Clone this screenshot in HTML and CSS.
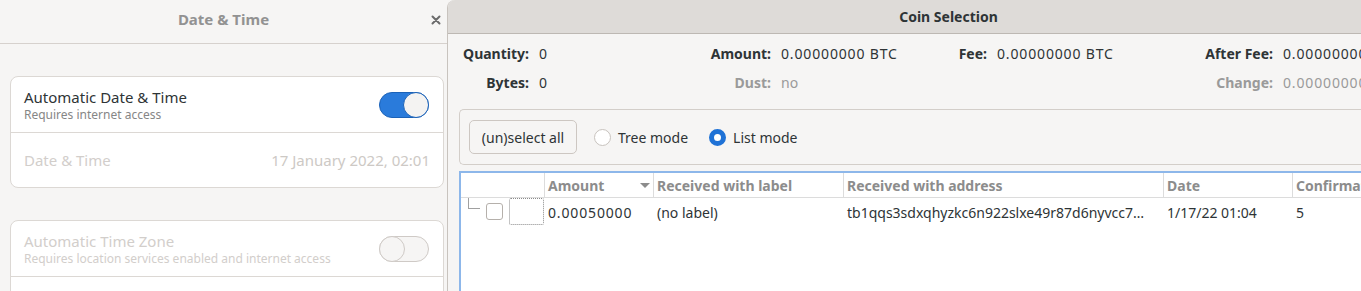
FILE: index.html
```html
<!DOCTYPE html>
<html lang="en">
<head>
    <meta charset="UTF-8">
    <title>Date &amp; Time / Coin Selection</title>
    <link rel="stylesheet" href="styles.css">
</head>
<body>
<div class="desktop">

    <!-- Settings window (backdrop) -->
    <section class="settings">
        <header class="settings-header">
            <span class="settings-title">Date &amp; Time</span>
            <svg class="close" width="10" height="10" viewBox="0 0 10 10">
                <path d="M1.5 1.5 L8.5 8.5 M8.5 1.5 L1.5 8.5" stroke="#6b6b6b" stroke-width="2" stroke-linecap="round"/>
            </svg>
        </header>

        <div class="settings-body">
            <div class="card">
                <div class="row">
                    <div class="row-text">
                        <div class="row-title">Automatic Date &amp; Time</div>
                        <div class="row-sub">Requires internet access</div>
                    </div>
                    <span class="switch on"><span class="knob"></span></span>
                </div>
                <div class="row disabled">
                    <div class="row-title">Date &amp; Time</div>
                    <div class="row-value">17 January 2022, 02:01</div>
                </div>
            </div>

            <div class="card">
                <div class="row disabled">
                    <div class="row-text">
                        <div class="row-title">Automatic Time Zone</div>
                        <div class="row-sub">Requires location services enabled and internet access</div>
                    </div>
                    <span class="switch"><span class="knob"></span></span>
                </div>
                <div class="row disabled"></div>
            </div>
        </div>
    </section>

    <!-- Coin Selection dialog -->
    <section class="dialog">
        <header class="dialog-header">Coin Selection</header>

        <div class="dialog-body">
            <div class="summary">
                <span class="lbl">Quantity:</span><span class="val">0</span>
                <span class="lbl">Amount:</span><span class="val num">0.00000000 BTC</span>
                <span class="lbl">Fee:</span><span class="val num">0.00000000 BTC</span>
                <span class="lbl">After Fee:</span><span class="val num">0.00000000 BTC</span>

                <span class="lbl">Bytes:</span><span class="val">0</span>
                <span class="lbl muted">Dust:</span><span class="val muted">no</span>
                <span class="lbl"></span><span class="val"></span>
                <span class="lbl muted">Change:</span><span class="val num muted">0.00000000 BTC</span>
            </div>

            <div class="toolbar">
                <button class="btn">(un)select all</button>
                <label class="radio"><span class="radio-dot"></span>Tree mode</label>
                <label class="radio checked"><span class="radio-dot"></span>List mode</label>
            </div>

            <div class="tree">
                <div class="tree-head">
                    <div class="col c-check"></div>
                    <div class="col c-amount">Amount<span class="sort"></span></div>
                    <div class="col c-label">Received with label</div>
                    <div class="col c-addr">Received with address</div>
                    <div class="col c-date">Date</div>
                    <div class="col c-conf">Confirmations</div>
                </div>
                <div class="tree-row">
                    <div class="col c-check">
                        <span class="branch"></span>
                        <span class="checkbox"></span>
                        <span class="focus-box"></span>
                    </div>
                    <div class="col c-amount num">0.00050000</div>
                    <div class="col c-label">(no label)</div>
                    <div class="col c-addr">tb1qqs3sdxqhyzkc6n922slxe49r87d6nyvcc7…</div>
                    <div class="col c-date">1/17/22 01:04</div>
                    <div class="col c-conf">5</div>
                </div>
            </div>
        </div>
    </section>

</div>
</body>
</html>
```

FILE: styles.css
```css
/* General Reset */
* {
    margin: 0;
    padding: 0;
    box-sizing: border-box;
}

body {
    background: #f6f5f4;
    color: #2e3436;
    font-family: 'Noto Sans', sans-serif;
    overflow: hidden;
}

.desktop {
    display: flex;
    width: 1361px;
    height: 291px;
    overflow: hidden;
}

/* Settings window */
.settings {
    flex: 0 0 447px;
    background: #f6f5f4;
}

.settings-header {
    height: 44px;
    border-bottom: 1px solid #d6d1cd;
    display: flex;
    align-items: center;
    justify-content: center;
    position: relative;
}

.settings-title {
    font-size: 15px;
    font-weight: 700;
    color: #929292;
    margin-top: -5px;
}

.close {
    position: absolute;
    right: 6px;
    top: 15px;
}

.settings-body {
    padding: 32px 3px 0 10px;
    display: flex;
    flex-direction: column;
    gap: 32px;
}

.card {
    background: #fff;
    border: 1px solid #dcd8d4;
    border-radius: 8px;
}

.row {
    height: 55px;
    display: flex;
    align-items: center;
    justify-content: space-between;
    padding: 0 13px 0 13px;
}

.row + .row {
    border-top: 1px solid #dcd8d4;
}

.row-title {
    font-size: 15px;
    color: #2e3436;
    line-height: 20px;
}

.row-sub {
    font-size: 12px;
    color: #868686;
    line-height: 16px;
}

.row-value {
    font-size: 15px;
    color: #cdc9c5;
}

.row.disabled .row-title,
.row.disabled .row-sub {
    color: #d2cecb;
}

.switch {
    width: 50px;
    height: 26px;
    border-radius: 13px;
    border: 1px solid #cfcac6;
    background: #f6f5f4;
    display: flex;
    align-items: center;
    padding: 0;
    margin-right: 1px;
}

.switch .knob {
    width: 26px;
    height: 26px;
    margin: -1px;
    border-radius: 50%;
    border: 1px solid #cfcac6;
    background: #f6f5f4;
}

.switch.on {
    background: #2a7bdb;
    border-color: #1b62b8;
    justify-content: flex-end;
}

.switch.on .knob {
    border-color: #1b62b8;
    background: #f4f3f2;
}

/* Coin Selection dialog */
.dialog {
    flex: 0 0 1002px;
    background: #f6f5f4;
    border-left: 1px solid #c8c3be;
    border-top-left-radius: 8px;
    overflow: hidden;
}

.dialog-header {
    height: 34px;
    background: #dedbd8;
    border-bottom: 1px solid #bdb8b3;
    display: flex;
    align-items: center;
    justify-content: center;
    font-size: 14px;
    font-weight: 700;
    color: #2e3436;
}

.dialog-body {
    padding: 5px 0 0 11px;
    font-size: 14px;
}

.summary {
    display: grid;
    grid-template-columns: 70px 120px 122px 100px 116px 150px 136px auto;
    grid-auto-rows: 29px;
    align-items: center;
}

.lbl {
    text-align: right;
    font-weight: 700;
}

.val {
    padding-left: 10px;
    white-space: nowrap;
}

/* digits in the reference font run a little wider */
.num {
    letter-spacing: 0.85px;
}

.muted {
    color: #9a9a9a;
}

.toolbar {
    margin-top: 12px;
    height: 56px;
    border: 1px solid #d3cec9;
    border-right: none;
    border-radius: 5px 0 0 5px;
    display: flex;
    align-items: center;
    padding-left: 9px;
}

.btn {
    font-family: inherit;
    font-size: 14px;
    color: #2e3436;
    height: 34px;
    width: 108px;
    background: #f6f5f4;
    border: 1px solid #cdc7c2;
    border-radius: 5px;
    margin-right: 17px;
}

.radio {
    display: flex;
    align-items: center;
    gap: 7px;
    margin-right: 21px;
}

.radio-dot {
    width: 17px;
    height: 17px;
    border-radius: 50%;
    border: 1px solid #c8c3be;
    background: #fff;
}

.radio.checked .radio-dot {
    border: 5px solid #1f72d6;
    background: #fff;
}

/* Tree view */
.tree {
    margin-top: 6px;
    background: #fff;
    border: 2px solid #8db7ea;
    border-right: none;
    height: 130px;
}

.tree-head,
.tree-row {
    display: flex;
}

.tree-head {
    height: 25px;
    border-bottom: 1px solid #dcdcdc;
    color: #8c8c8c;
    font-weight: 700;
}

.tree-row {
    height: 29px;
}

.col {
    display: flex;
    align-items: center;
    padding-left: 3px;
    white-space: nowrap;
    position: relative;
}

.tree-head .col + .col {
    border-left: 1px solid #dcdcdc;
}

.tree-row .col + .col {
    border-left: 1px solid transparent;
}

.c-check { width: 83px; }
.c-amount { width: 109px; }
.c-label { width: 190px; }
.c-addr { width: 320px; }
.c-date { width: 129px; }
.c-conf { width: 140px; }

.sort {
    margin-left: auto;
    margin-right: 3px;
    width: 0;
    height: 0;
    border-left: 5px solid transparent;
    border-right: 5px solid transparent;
    border-top: 5px solid #8c8c8c;
}

.branch {
    position: absolute;
    left: 7px;
    top: 0;
    width: 12px;
    height: 11px;
    border-left: 1px solid #a0a0a0;
    border-bottom: 1px solid #a0a0a0;
}

.checkbox {
    position: absolute;
    left: 25px;
    top: 5px;
    width: 17px;
    height: 17px;
    border: 1px solid #b5b0ab;
    border-radius: 3px;
    background: #fff;
}

.focus-box {
    position: absolute;
    left: 48px;
    top: 0;
    width: 35px;
    height: 27px;
    border: 1px dotted #8a8a8a;
    border-radius: 2px;
}
```
